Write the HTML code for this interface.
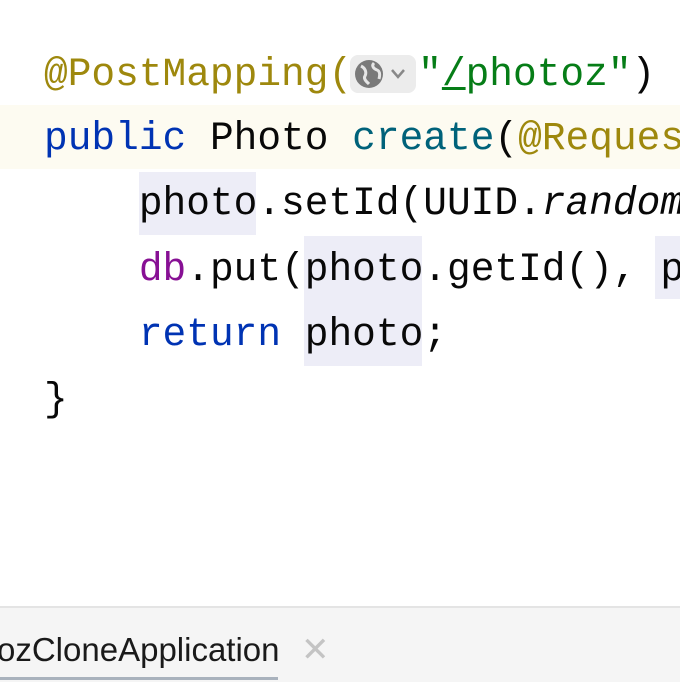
<!DOCTYPE html>
<html><head><meta charset="utf-8"><style>
body{margin:0;width:680px;height:680px;background:#fff;overflow:hidden;position:relative;font-family:"Liberation Mono",monospace}
.l{position:absolute;left:44px;height:65px;line-height:65px;font-size:39.5px;white-space:pre;color:#080808}
.an{color:#9e880d}.kw{color:#0033b3}.st{color:#067d17}.fn{color:#00627a}.pf{color:#871094}
.hl{position:absolute;background:#ededf7}
</style></head><body>
<div style="position:absolute;left:0;top:105px;width:680px;height:64px;background:#fdfbf1"></div>
<div class="hl" style="left:139px;top:172px;width:117px;height:63px"></div>
<div class="hl" style="left:304px;top:236px;width:118px;height:130px"></div>
<div class="hl" style="left:655px;top:236px;width:25px;height:63px"></div>
<div style="position:absolute;left:350px;top:55px;width:66px;height:38px;background:#ececec;border-radius:8px"></div>
<svg style="position:absolute;left:352px;top:57px" width="64" height="34" viewBox="0 0 64 34"><circle cx="17" cy="17" r="14" fill="#7a7a7a"/><path d="M9 9c4 2 6 6 4 10-2 3 2 6 4 8M22 6c-3 3 0 6 3 7s3 5 2 9" stroke="#e6e6e6" stroke-width="3" fill="none"/><path d="M40 13l6 7 6-7" stroke="#888" stroke-width="2.5" fill="none"/></svg>
<div class="l" style="top:42px"><span class="an">@PostMapping(</span><span style="display:inline-block;width:66px"></span><span class="st">"<u>/</u>photoz"</span>)</div>
<div class="l" style="top:106px"><span class="kw">public</span> Photo <span class="fn">create</span>(<span class="an">@Reques</span></div>
<div class="l" style="top:171px">    photo.setId(UUID.<i>random</i></div>
<div class="l" style="top:237px">    <span class="pf">db</span>.put(photo.getId(), p</div>
<div class="l" style="top:302px">    <span class="kw">return</span> photo;</div>
<div class="l" style="top:367px">}</div>
<div style="position:absolute;left:0;top:606px;width:680px;height:74px;background:#f5f5f5;border-top:2px solid #e4e4e4"></div>
<div style="position:absolute;left:-3px;top:631px;font-family:'Liberation Sans',sans-serif;font-size:33px;color:#1a1a1a">ozCloneApplication</div>
<div style="position:absolute;left:301px;top:630px;font-family:'Liberation Sans',sans-serif;font-size:34px;color:#c4c4c4">✕</div>
<div style="position:absolute;left:0;top:677px;width:278px;height:3px;background:#a9b2bd"></div>
</body></html>
